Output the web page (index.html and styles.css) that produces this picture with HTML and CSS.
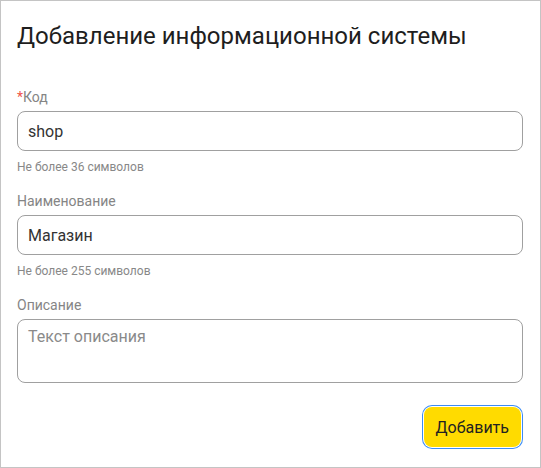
FILE: index.html
```html
<!DOCTYPE html>
<html lang="ru">
<head>
  <meta charset="UTF-8">
  <title>Добавление информационной системы</title>
  <link rel="stylesheet" href="styles.css">
</head>
<body>

<form class="card" onsubmit="return false">
  <h1 class="card-title">Добавление информационной системы</h1>

  <div class="field">
    <label class="field-label" for="code"><span class="required">*</span>Код</label>
    <input class="field-input" id="code" type="text" value="shop">
    <div class="field-hint">Не более 36 символов</div>
  </div>

  <div class="field">
    <label class="field-label" for="name">Наименование</label>
    <input class="field-input" id="name" type="text" value="Магазин">
    <div class="field-hint">Не более 255 символов</div>
  </div>

  <div class="field">
    <label class="field-label" for="descr">Описание</label>
    <textarea class="field-input field-textarea" id="descr" placeholder="Текст описания"></textarea>
  </div>

  <div class="actions">
    <button class="btn-primary" type="submit">Добавить</button>
  </div>
</form>

</body>
</html>
```

FILE: styles.css
```css
* {
  box-sizing: border-box;
}

body {
  margin: 0;
  font-family: Roboto, "Noto Sans", sans-serif;
  color: #222;
  background: #fff;
}

.card {
  width: 541px;
  height: 468px;
  border: 1px solid #c4c4c4;
  padding: 21px 17px 0 16px;
}

.card-title {
  margin: 0 0 37px;
  font-size: 24px;
  font-weight: 400;
  line-height: 28px;
  color: #1e1e1e;
}

.field {
  display: flex;
  flex-direction: column;
  margin-bottom: 16px;
}

.field-label {
  font-size: 14px;
  line-height: 20px;
  color: #858585;
  margin-bottom: 4px;
}

.required {
  color: #f0554a;
}

.field-input {
  width: 100%;
  height: 40px;
  border: 1px solid #a0a0a0;
  border-radius: 8px;
  padding: 0 10px;
  font-family: inherit;
  font-size: 16px;
  color: #333;
  background: #fff;
  outline: none;
}

.field-textarea {
  height: 64px;
  padding: 7px 10px;
  line-height: 20px;
  resize: none;
}

.field-textarea::placeholder {
  color: #8a8a8a;
}

.field-hint {
  margin-top: 8px;
  font-size: 12px;
  line-height: 16px;
  color: #888;
}

.actions {
  display: flex;
  justify-content: flex-end;
  padding: 8px 2px 0;
}

.btn-primary {
  height: 40px;
  padding: 0 12px;
  border: none;
  border-radius: 8px;
  background: #ffdb00;
  color: #222;
  font-family: inherit;
  font-size: 16px;
  cursor: pointer;
  box-shadow: 0 0 0 1px #fff, 0 0 0 2px #3b8cf5;
}
```
